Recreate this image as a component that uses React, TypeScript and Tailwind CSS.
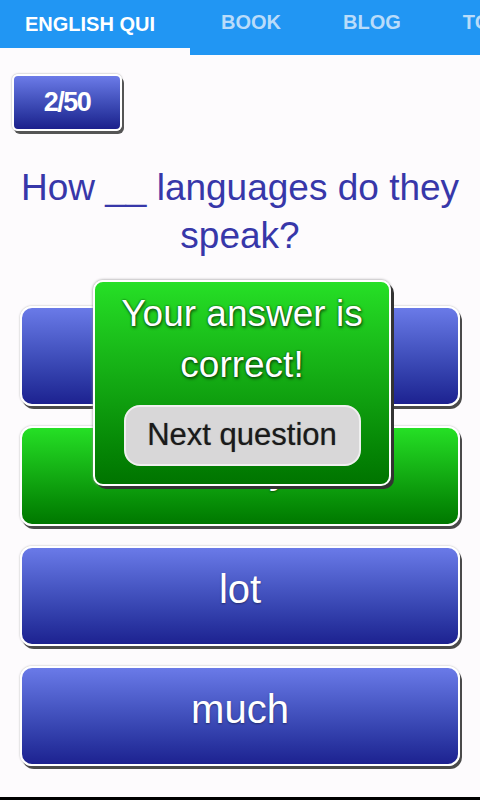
import React from 'react';

const answers = [
  { label: 'lots', correct: false },
  { label: 'many', correct: true },
  { label: 'lot', correct: false },
  { label: 'much', correct: false },
];

const tabs = ['BOOK', 'BLOG', 'TOPICS'];

export default function App() {
  return (
    <div
      className="relative w-full min-h-[800px] flex flex-col bg-[#fdfbfd] overflow-hidden"
      style={{ fontFamily: '"Liberation Sans", Arial, sans-serif' }}
    >
      {/* top tabs */}
      <nav className="h-[55px] bg-[#2196f3] flex shrink-0 overflow-hidden">
        <div className="w-[190px] shrink-0 flex flex-col">
          <div className="flex-1 flex items-center pl-[25px] text-white font-bold text-[20px] whitespace-nowrap overflow-hidden">
            ENGLISH QUI
          </div>
          <div className="h-[7px] bg-[#fdfbfd]" />
        </div>
        {tabs.map((t) => (
          <div
            key={t}
            className="px-[31px] pb-[11px] flex items-center text-[#b9dcfa] font-bold text-[20px] whitespace-nowrap shrink-0"
          >
            {t}
          </div>
        ))}
      </nav>

      {/* counter */}
      <div className="mt-[19px] ml-[12px]">
        <div className="w-[110px] h-[57px] rounded-[6px] border-2 border-white bg-gradient-to-b from-[#6c7be8] to-[#1c1f8c] shadow-[2px_3px_0_0_#555,0_0_2px_#999] flex items-center justify-center text-white font-bold text-[27px] tracking-[-1.5px]">
          2/50
        </div>
      </div>

      {/* question */}
      <h2 className="mt-[33px] px-3 text-center text-[#3737a9] text-[37px] leading-[48px] font-normal">
        How __ languages do they speak?
      </h2>

      {/* answers */}
      <div className="mt-[46px] px-5 flex flex-col gap-5">
        {answers.map((a) => (
          <button
            key={a.label}
            className={
              a.correct
                ? 'h-[100px] pb-[14px] rounded-[12px] border-2 border-white bg-gradient-to-b from-[#25e025] to-[#007800] shadow-[2px_3px_0_0_#4a4a4a,0_0_2px_#aaa] text-white text-[40px] [text-shadow:0_1px_2px_rgba(0,0,0,0.4)]'
                : 'h-[100px] pb-[14px] rounded-[12px] border-2 border-white bg-gradient-to-b from-[#6a7ae8] to-[#1d2190] shadow-[2px_3px_0_0_#4a4a4a,0_0_2px_#aaa] text-white text-[40px] [text-shadow:0_1px_2px_rgba(0,0,0,0.4)]'
            }
          >
            {a.label}
          </button>
        ))}
      </div>

      <div className="flex-1" />
      <div className="h-[3px] bg-black" />

      {/* result popup */}
      <div className="absolute left-[93px] top-[280px] w-[298px] h-[206px] rounded-[10px] border-2 border-white bg-gradient-to-b from-[#26e026] to-[#007400] shadow-[3px_3px_0_0_#333,0_0_3px_#888] flex flex-col items-center">
        <div className="mt-[6px] text-center text-white text-[37px] leading-[51px] [text-shadow:0_0_2px_rgba(0,40,0,0.9),1px_2px_3px_rgba(0,0,0,0.5)]">
          Your answer is
          <br />
          correct!
        </div>
        <button className="mt-[15px] w-[237px] h-[61px] rounded-[16px] border-2 border-[#f0f0f0] bg-[#d8d7d8] text-[#1a1a1a] text-[31px] [text-shadow:0_0_1px_rgba(0,0,0,0.5)]">
          Next question
        </button>
      </div>
    </div>
  );
}
